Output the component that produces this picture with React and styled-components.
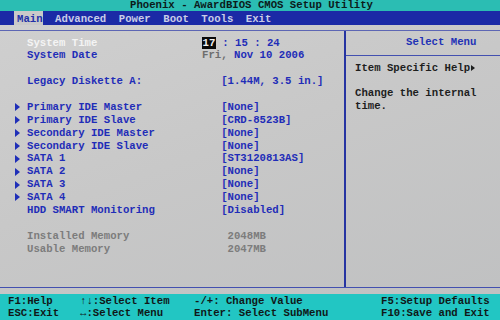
import React from 'react';
import styled, { createGlobalStyle } from 'styled-components';

const GlobalStyle = createGlobalStyle`
  html, body {
    margin: 0;
    padding: 0;
    background: #c4c4c4;
  }
  body {
    font-family: "Liberation Mono", "DejaVu Sans Mono", monospace;
  }
`;

const Screen = styled.div`
  width: 500px;
  height: 320px;
  display: flex;
  flex-direction: column;
  overflow: hidden;
  font-size: 10.67px;
  font-weight: bold;
  background: linear-gradient(160deg, #d0d0d0 0%, #c8c8c8 45%, #bfc0c1 100%);
`;

const TitleBar = styled.div`
  height: 11px;
  line-height: 11px;
  background: #2bbdb3;
  color: #0c1a1a;
  text-align: center;
  padding-left: 3px;
`;

const MenuBar = styled.nav`
  height: 14px;
  display: flex;
  align-items: stretch;
  background: #1b2aa6;
  padding-left: 13.5px;
  gap: 9px;
`;

const MenuItem = styled.span`
  display: flex;
  align-items: center;
  padding: 1px 0 0 3.5px;
  color: ${(p) => (p.$active ? '#2230a8' : '#c9cde8')};
  background: ${(p) => (p.$active ? '#c9c9c9' : 'transparent')};
`;

const Frame = styled.div`
  margin-top: 5px;
  height: 256px;
  display: grid;
  grid-template-columns: 346px 1fr;
  border-top: 1.5px solid #5d66b4;
  border-bottom: 1.5px solid #4350b0;
`;

const LeftPanel = styled.section`
  border-right: 2px solid #2634a2;
  padding-top: 5.5px;
`;

const Row = styled.div`
  display: grid;
  grid-template-columns: 27px 175px 1fr;
  height: 12.875px;
  line-height: 12.875px;
  white-space: pre;
`;

const Marker = styled.span`
  display: flex;
  align-items: center;
  padding-left: 15px;
  &::before {
    content: '';
    display: ${(p) => (p.$show ? 'block' : 'none')};
    border-left: 5px solid #1f2fb8;
    border-top: 4px solid transparent;
    border-bottom: 4px solid transparent;
  }
`;

const Label = styled.span`
  color: ${(p) => p.$color || '#1f2db8'};
`;

const Value = styled.span`
  color: ${(p) => p.$color || '#1f2db8'};
  padding-left: ${(p) => p.$indent || 0}ch;
`;

const Cursor = styled.span`
  background: #0a0a0a;
  color: #f2f2f2;
  padding: 0 0.5px;
`;

const Dim = styled.span`
  color: #6d6d6d;
`;

const RightPanel = styled.section`
  display: flex;
  flex-direction: column;
`;

const HelpHeader = styled.div`
  height: 23.5px;
  line-height: 23px;
  padding-left: 60px;
  color: #2232b6;
  border-bottom: 1.5px solid #4350b0;
`;

const HelpBody = styled.div`
  padding: 6px 0 0 9px;
  line-height: 12.75px;
  color: #1e1e1e;
  white-space: pre;
`;

const HelpArrow = styled.span`
  display: inline-block;
  border-left: 4px solid #1e1e1e;
  border-top: 3.5px solid transparent;
  border-bottom: 3.5px solid transparent;
  margin-left: 1px;
  vertical-align: 0px;
`;

const Footer = styled.footer`
  margin-top: 5.5px;
  flex: 1;
  background: #22c6c3;
  padding: 1px 0 0 8px;
  display: grid;
  grid-template-columns: 72px 114px 187px 1fr;
  grid-auto-rows: 12.7px;
  line-height: 12.7px;
  color: #101818;
  white-space: pre;
`;

const rows = [
  { arrow: true, label: 'Primary IDE Master', value: '[None]' },
  { arrow: true, label: 'Primary IDE Slave', value: '[CRD-8523B]' },
  { arrow: true, label: 'Secondary IDE Master', value: '[None]' },
  { arrow: true, label: 'Secondary IDE Slave', value: '[None]' },
  { arrow: true, label: 'SATA 1', value: '[ST3120813AS]' },
  { arrow: true, label: 'SATA 2', value: '[None]' },
  { arrow: true, label: 'SATA 3', value: '[None]' },
  { arrow: true, label: 'SATA 4', value: '[None]' },
  { arrow: false, label: 'HDD SMART Monitoring', value: '[Disabled]' },
];

const menus = ['Main', 'Advanced', 'Power', 'Boot', 'Tools', 'Exit'];

const keys = [
  'F1:Help',
  '↑↓:Select Item',
  '-/+: Change Value',
  'F5:Setup Defaults',
  'ESC:Exit',
  '↔:Select Menu',
  'Enter: Select SubMenu',
  'F10:Save and Exit',
];

const App = () => (
  <>
    <GlobalStyle />
    <Screen>
      <TitleBar>Phoenix - AwardBIOS CMOS Setup Utility</TitleBar>
      <MenuBar>
        {menus.map((m, i) => (
          <MenuItem key={m} $active={i === 0}>
            {m}
          </MenuItem>
        ))}
      </MenuBar>
      <Frame>
        <LeftPanel>
          <Row>
            <Marker />
            <Label $color="#f4f4f4">System Time</Label>
            <Value>
              <Cursor>17</Cursor> : 15 : 24
            </Value>
          </Row>
          <Row>
            <Marker />
            <Label>System Date</Label>
            <Value>
              <Dim>Fri,</Dim> Nov 10 2006
            </Value>
          </Row>
          <Row />
          <Row>
            <Marker />
            <Label>Legacy Diskette A:</Label>
            <Value $indent={3}>[1.44M, 3.5 in.]</Value>
          </Row>
          <Row />
          {rows.map((r) => (
            <Row key={r.label}>
              <Marker $show={r.arrow} />
              <Label>{r.label}</Label>
              <Value $indent={3}>{r.value}</Value>
            </Row>
          ))}
          <Row />
          <Row>
            <Marker />
            <Label $color="#7c7c7c">Installed Memory</Label>
            <Value $indent={4} $color="#7c7c7c">2048MB</Value>
          </Row>
          <Row>
            <Marker />
            <Label $color="#7c7c7c">Usable Memory</Label>
            <Value $indent={4} $color="#7c7c7c">2047MB</Value>
          </Row>
        </LeftPanel>
        <RightPanel>
          <HelpHeader>Select Menu</HelpHeader>
          <HelpBody>
            Item Specific Help<HelpArrow />
            {'\n\nChange the internal\ntime.'}
          </HelpBody>
        </RightPanel>
      </Frame>
      <Footer>
        {keys.map((k) => (
          <span key={k}>{k}</span>
        ))}
      </Footer>
    </Screen>
  </>
);

export default App;
